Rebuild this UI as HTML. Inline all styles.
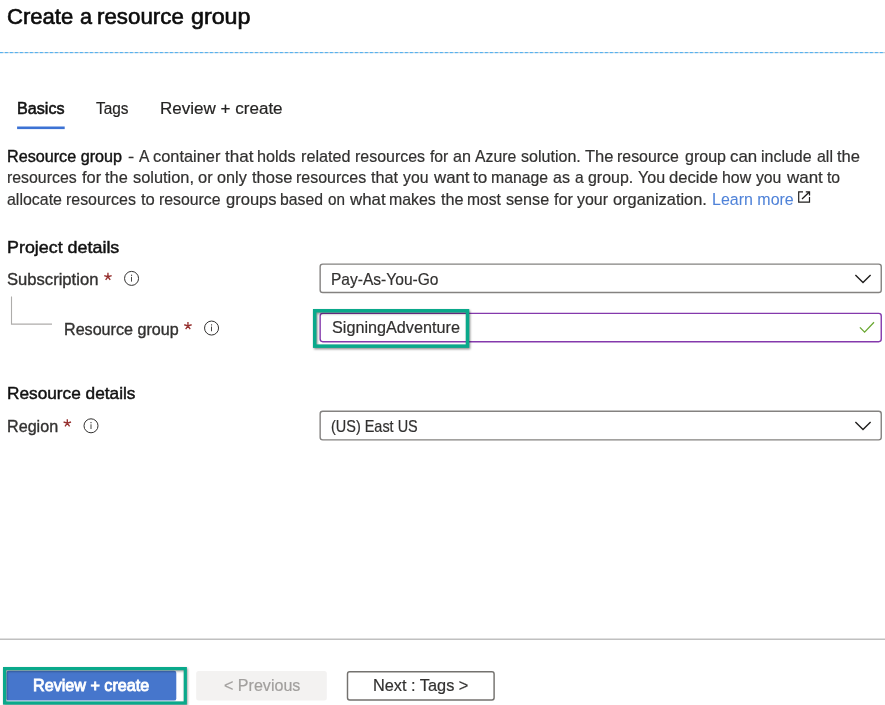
<!DOCTYPE html>
<html lang="en">
<head>
<meta charset="utf-8">
<title>Create a resource group</title>
<style>
html,body{margin:0;padding:0;background:#fff;}
body{width:885px;height:705px;position:relative;overflow:hidden;font-family:"Liberation Sans",sans-serif;}
.t{position:absolute;white-space:pre;line-height:1;transform-origin:0 0;display:block;}
#tx{position:absolute;left:0;top:0;width:885px;height:705px;will-change:transform;}
.a{position:absolute;display:block;overflow:visible;}
.box{position:absolute;box-sizing:border-box;background:#fff;}
</style>
</head>
<body>
<svg class="a" style="left:0;top:0" width="885" height="705" viewBox="0 0 885 705">
<defs>
<filter id="sh" x="-10%" y="-20%" width="120%" height="150%"><feGaussianBlur stdDeviation="1.1"/></filter>
<pattern id="dash" x="-0.2" y="0" width="5" height="2" patternUnits="userSpaceOnUse"><rect x="0" y="0" width="5" height="2" fill="#dddbd9"/><rect x="0" y="0" width="3.3" height="2" fill="#56b1ef"/></pattern>
</defs>
<!-- title dashed separator -->
<rect x="0" y="52" width="885" height="1.2" fill="url(#dash)"/>
<!-- active tab underline -->
<rect x="17.1" y="126.5" width="47.6" height="2.6" fill="#3c72d4"/>
<!-- external link icon -->
<g fill="none" stroke="#201f1e" stroke-width="1.2"><path d="M803 191.8H798.7V202.1H809.5V197"/><path d="M802 199L809.3 192M805.8 191.8H809.5V195.5" stroke-width="1.3"/></g>
<!-- tree connector -->
<path d="M11.5 296.4V324.1H52" fill="none" stroke="#aeacaa" stroke-width="1.1"/>
<!-- subscription dropdown -->
<rect x="320.15" y="264.1" width="561.1" height="28.4" rx="2.6" fill="#fff" stroke="#848280" stroke-width="1.4"/>
<path d="M855.4 275L863 282.5L870.6 275" fill="none" stroke="#201f1e" stroke-width="1.4"/>
<!-- resource group input -->
<rect x="320.15" y="313.4" width="561.1" height="28.3" rx="2.6" fill="#fff" stroke="#8439ac" stroke-width="1.4"/>
<path d="M859.9 327.4L864.6 332.1L874 322.3" fill="none" stroke="#6aa832" stroke-width="1.3"/>
<!-- teal highlight around resource group input (shadow then frame) -->
<rect x="315.7" y="312.1" width="152.8" height="35.4" fill="none" stroke="#000" stroke-opacity=".45" stroke-width="3.4" filter="url(#sh)"/>
<rect x="314.7" y="310.75" width="152.8" height="35.4" fill="none" stroke="#0aa98b" stroke-width="3.5"/>
<!-- region dropdown -->
<rect x="320.15" y="411.3" width="561.1" height="28.6" rx="2.6" fill="#fff" stroke="#848280" stroke-width="1.4"/>
<path d="M855.4 422L863 429.5L870.6 422" fill="none" stroke="#201f1e" stroke-width="1.4"/>
<!-- footer rule -->
<rect x="0" y="638.5" width="885" height="1.5" fill="#c0c0c0"/>
<!-- buttons -->
<rect x="6.5" y="670.8" width="169.8" height="29.8" rx="2.2" fill="#4676cc"/>
<rect x="196.2" y="671" width="130.6" height="29.6" rx="2.5" fill="#f3f2f1"/>
<rect x="347.5" y="671.8" width="146.6" height="28.2" rx="2.2" fill="#fff" stroke="#74726f" stroke-width="1.45"/>
<!-- teal highlight around primary button -->
<rect x="5.4" y="669.8" width="180.7" height="34.4" fill="none" stroke="#000" stroke-opacity=".4" stroke-width="3.1" filter="url(#sh)"/>
<rect x="4.6" y="668.6" width="180.7" height="34.4" fill="none" stroke="#0aa98b" stroke-width="3.2"/>
<path d="M107.95 276.75L107.95 272.85M107.95 276.75L111.66 275.54M107.95 276.75L110.24 279.91M107.95 276.75L105.66 279.91M107.95 276.75L104.24 275.54" fill="none" stroke="#96302f" stroke-width="1.35"/><path d="M187.95 325.95L187.95 322.05M187.95 325.95L191.66 324.74M187.95 325.95L190.24 329.11M187.95 325.95L185.66 329.11M187.95 325.95L184.24 324.74" fill="none" stroke="#96302f" stroke-width="1.35"/><path d="M67.30 423.20L67.30 419.30M67.30 423.20L71.01 421.99M67.30 423.20L69.59 426.36M67.30 423.20L65.01 426.36M67.30 423.20L63.59 421.99" fill="none" stroke="#96302f" stroke-width="1.35"/><circle cx="131.55" cy="278.4" r="7" fill="none" stroke="#323130" stroke-width="1"/><rect x="131.10" y="276.90" width="0.9" height="4.7" fill="#323130"/><rect x="131.00" y="274.70" width="1.1" height="1.1" fill="#323130"/><circle cx="211.55" cy="328.05" r="7" fill="none" stroke="#323130" stroke-width="1"/><rect x="211.10" y="326.55" width="0.9" height="4.7" fill="#323130"/><rect x="211.00" y="324.35" width="1.1" height="1.1" fill="#323130"/><circle cx="91.0" cy="425.8" r="7" fill="none" stroke="#323130" stroke-width="1"/><rect x="90.55" y="424.30" width="0.9" height="4.7" fill="#323130"/><rect x="90.45" y="422.10" width="1.1" height="1.1" fill="#323130"/>
</svg>

<div id="tx">
<span class="t" style="left:6.58px;top:5.93px;font-size:21.7px;color:#0c0c0c;transform:scaleX(1.0179);-webkit-text-stroke:0.6px #0c0c0c">Create </span>
<span class="t" style="left:80.00px;top:5.93px;font-size:21.7px;color:#0c0c0c;transform:scaleX(0.9948);-webkit-text-stroke:0.6px #0c0c0c">a </span>
<span class="t" style="left:96.97px;top:5.93px;font-size:21.7px;color:#0c0c0c;transform:scaleX(1.0287);-webkit-text-stroke:0.6px #0c0c0c">resource </span>
<span class="t" style="left:191.30px;top:5.93px;font-size:21.7px;color:#0c0c0c;transform:scaleX(1.0721);-webkit-text-stroke:0.6px #0c0c0c">group</span>
<span class="t" style="left:16.91px;top:100.78px;font-size:16.8px;color:#111;transform:scaleX(0.9626);-webkit-text-stroke:0.55px #111">Basics</span>
<span class="t" style="left:95.60px;top:100.36px;font-size:17.3px;color:#252423;transform:scaleX(0.8895);-webkit-text-stroke:0.2px #252423">Tags</span>
<span class="t" style="left:159.51px;top:100.16px;font-size:17.3px;color:#252423;transform:scaleX(0.9855);-webkit-text-stroke:0.2px #252423">Review + create</span>
<span class="t" style="left:6.80px;top:147.69px;font-size:16.2px;color:#111;transform:scaleX(0.9984);-webkit-text-stroke:0.4px #111">Resource group</span>
<span class="t" style="left:128.00px;top:147.69px;font-size:16.2px;color:#323130;transform:scaleX(1.1521);-webkit-text-stroke:0.2px #323130">- </span>
<span class="t" style="left:139.40px;top:147.69px;font-size:16.2px;color:#323130;transform:scaleX(0.9647);-webkit-text-stroke:0.2px #323130">A </span>
<span class="t" style="left:153.29px;top:147.69px;font-size:16.2px;color:#323130;transform:scaleX(1.0122);-webkit-text-stroke:0.2px #323130">container </span>
<span class="t" style="left:225.25px;top:147.69px;font-size:16.2px;color:#323130;transform:scaleX(1.0541);-webkit-text-stroke:0.2px #323130">that </span>
<span class="t" style="left:257.46px;top:147.69px;font-size:16.2px;color:#323130;transform:scaleX(1.0003);-webkit-text-stroke:0.2px #323130">holds </span>
<span class="t" style="left:300.67px;top:147.69px;font-size:16.2px;color:#323130;transform:scaleX(1.0002);-webkit-text-stroke:0.2px #323130">related </span>
<span class="t" style="left:354.70px;top:147.69px;font-size:16.2px;color:#323130;transform:scaleX(0.9850);-webkit-text-stroke:0.2px #323130">resources </span>
<span class="t" style="left:430.13px;top:147.69px;font-size:16.2px;color:#323130;transform:scaleX(0.9714);-webkit-text-stroke:0.2px #323130">for </span>
<span class="t" style="left:452.85px;top:147.69px;font-size:16.2px;color:#323130;transform:scaleX(0.9981);-webkit-text-stroke:0.2px #323130">an </span>
<span class="t" style="left:475.33px;top:147.69px;font-size:16.2px;color:#323130;transform:scaleX(0.9752);-webkit-text-stroke:0.2px #323130">Azure </span>
<span class="t" style="left:520.96px;top:147.69px;font-size:16.2px;color:#323130;transform:scaleX(0.9913);-webkit-text-stroke:0.2px #323130">solution. </span>
<span class="t" style="left:585.19px;top:147.69px;font-size:16.2px;color:#323130;transform:scaleX(1.0207);-webkit-text-stroke:0.2px #323130">The </span>
<span class="t" style="left:617.29px;top:147.69px;font-size:16.2px;color:#323130;transform:scaleX(0.9818);-webkit-text-stroke:0.2px #323130">resource </span>
<span class="t" style="left:684.53px;top:147.69px;font-size:16.2px;color:#323130;transform:scaleX(0.9901);-webkit-text-stroke:0.2px #323130">group </span>
<span class="t" style="left:729.98px;top:147.69px;font-size:16.2px;color:#323130;transform:scaleX(1.0397);-webkit-text-stroke:0.2px #323130">can </span>
<span class="t" style="left:760.82px;top:147.69px;font-size:16.2px;color:#323130;transform:scaleX(0.9861);-webkit-text-stroke:0.2px #323130">include </span>
<span class="t" style="left:816.83px;top:147.69px;font-size:16.2px;color:#323130;transform:scaleX(0.9837);-webkit-text-stroke:0.2px #323130">all </span>
<span class="t" style="left:837.29px;top:147.69px;font-size:16.2px;color:#323130;transform:scaleX(1.0221);-webkit-text-stroke:0.2px #323130">the</span>
<span class="t" style="left:6.62px;top:169.29px;font-size:16.2px;color:#323130;transform:scaleX(0.9798);-webkit-text-stroke:0.2px #323130">resources </span>
<span class="t" style="left:81.65px;top:169.29px;font-size:16.2px;color:#323130;transform:scaleX(1.0135);-webkit-text-stroke:0.2px #323130">for </span>
<span class="t" style="left:105.36px;top:169.29px;font-size:16.2px;color:#323130;transform:scaleX(1.0095);-webkit-text-stroke:0.2px #323130">the </span>
<span class="t" style="left:132.63px;top:169.29px;font-size:16.2px;color:#323130;transform:scaleX(1.0119);-webkit-text-stroke:0.2px #323130">solution, </span>
<span class="t" style="left:198.20px;top:169.29px;font-size:16.2px;color:#323130;transform:scaleX(1.0164);-webkit-text-stroke:0.2px #323130">or </span>
<span class="t" style="left:217.41px;top:169.29px;font-size:16.2px;color:#323130;transform:scaleX(1.0027);-webkit-text-stroke:0.2px #323130">only </span>
<span class="t" style="left:251.71px;top:169.29px;font-size:16.2px;color:#323130;transform:scaleX(1.0194);-webkit-text-stroke:0.2px #323130">those </span>
<span class="t" style="left:295.69px;top:169.29px;font-size:16.2px;color:#323130;transform:scaleX(0.9877);-webkit-text-stroke:0.2px #323130">resources </span>
<span class="t" style="left:371.32px;top:169.29px;font-size:16.2px;color:#323130;transform:scaleX(1.0022);-webkit-text-stroke:0.2px #323130">that </span>
<span class="t" style="left:402.89px;top:169.29px;font-size:16.2px;color:#323130;transform:scaleX(0.9749);-webkit-text-stroke:0.2px #323130">you </span>
<span class="t" style="left:433.77px;top:169.29px;font-size:16.2px;color:#323130;transform:scaleX(1.0373);-webkit-text-stroke:0.2px #323130">want </span>
<span class="t" style="left:472.88px;top:169.29px;font-size:16.2px;color:#323130;transform:scaleX(1.0569);-webkit-text-stroke:0.2px #323130">to </span>
<span class="t" style="left:490.93px;top:169.29px;font-size:16.2px;color:#323130;transform:scaleX(0.9770);-webkit-text-stroke:0.2px #323130">manage </span>
<span class="t" style="left:553.46px;top:169.29px;font-size:16.2px;color:#323130;transform:scaleX(0.9911);-webkit-text-stroke:0.2px #323130">as </span>
<span class="t" style="left:574.87px;top:169.29px;font-size:16.2px;color:#323130;transform:scaleX(0.9663);-webkit-text-stroke:0.2px #323130">a </span>
<span class="t" style="left:587.93px;top:169.29px;font-size:16.2px;color:#323130;transform:scaleX(0.9856);-webkit-text-stroke:0.2px #323130">group. </span>
<span class="t" style="left:637.62px;top:169.29px;font-size:16.2px;color:#323130;transform:scaleX(0.9914);-webkit-text-stroke:0.2px #323130">You </span>
<span class="t" style="left:669.17px;top:169.29px;font-size:16.2px;color:#323130;transform:scaleX(1.0287);-webkit-text-stroke:0.2px #323130">decide </span>
<span class="t" style="left:721.89px;top:169.29px;font-size:16.2px;color:#323130;transform:scaleX(0.9809);-webkit-text-stroke:0.2px #323130">how </span>
<span class="t" style="left:756.42px;top:169.29px;font-size:16.2px;color:#323130;transform:scaleX(0.9720);-webkit-text-stroke:0.2px #323130">you </span>
<span class="t" style="left:787.22px;top:169.29px;font-size:16.2px;color:#323130;transform:scaleX(1.0460);-webkit-text-stroke:0.2px #323130">want </span>
<span class="t" style="left:826.76px;top:169.29px;font-size:16.2px;color:#323130;transform:scaleX(0.9727);-webkit-text-stroke:0.2px #323130">to</span>
<span class="t" style="left:7.40px;top:191.29px;font-size:16.2px;color:#323130;transform:scaleX(0.9857);-webkit-text-stroke:0.2px #323130">allocate </span>
<span class="t" style="left:65.85px;top:191.29px;font-size:16.2px;color:#323130;transform:scaleX(0.9834);-webkit-text-stroke:0.2px #323130">resources </span>
<span class="t" style="left:141.16px;top:191.29px;font-size:16.2px;color:#323130;transform:scaleX(1.0251);-webkit-text-stroke:0.2px #323130">to </span>
<span class="t" style="left:158.63px;top:191.29px;font-size:16.2px;color:#323130;transform:scaleX(0.9771);-webkit-text-stroke:0.2px #323130">resource </span>
<span class="t" style="left:225.55px;top:191.29px;font-size:16.2px;color:#323130;transform:scaleX(1.0224);-webkit-text-stroke:0.2px #323130">groups </span>
<span class="t" style="left:279.78px;top:191.29px;font-size:16.2px;color:#323130;transform:scaleX(0.9748);-webkit-text-stroke:0.2px #323130">based </span>
<span class="t" style="left:328.14px;top:191.29px;font-size:16.2px;color:#323130;transform:scaleX(0.9445);-webkit-text-stroke:0.2px #323130">on </span>
<span class="t" style="left:350.45px;top:191.29px;font-size:16.2px;color:#323130;transform:scaleX(1.0411);-webkit-text-stroke:0.2px #323130">what </span>
<span class="t" style="left:388.72px;top:191.29px;font-size:16.2px;color:#323130;transform:scaleX(0.9818);-webkit-text-stroke:0.2px #323130">makes </span>
<span class="t" style="left:440.94px;top:191.29px;font-size:16.2px;color:#323130;transform:scaleX(1.0043);-webkit-text-stroke:0.2px #323130">the </span>
<span class="t" style="left:467.10px;top:191.29px;font-size:16.2px;color:#323130;transform:scaleX(0.9654);-webkit-text-stroke:0.2px #323130">most </span>
<span class="t" style="left:506.28px;top:191.29px;font-size:16.2px;color:#323130;transform:scaleX(0.9995);-webkit-text-stroke:0.2px #323130">sense </span>
<span class="t" style="left:553.96px;top:191.29px;font-size:16.2px;color:#323130;transform:scaleX(0.9967);-webkit-text-stroke:0.2px #323130">for </span>
<span class="t" style="left:577.27px;top:191.29px;font-size:16.2px;color:#323130;transform:scaleX(0.9865);-webkit-text-stroke:0.2px #323130">your </span>
<span class="t" style="left:612.89px;top:191.29px;font-size:16.2px;color:#323130;transform:scaleX(1.0131);-webkit-text-stroke:0.2px #323130">organization.</span>
<span class="t" style="left:711.64px;top:191.29px;font-size:16.2px;color:#4f82d8;transform:scaleX(0.9874);-webkit-text-stroke:0.05px #4f82d8">Learn more</span>
<span class="t" style="left:6.77px;top:238.51px;font-size:17.0px;color:#111;transform:scaleX(1.0519);-webkit-text-stroke:0.45px #111">Project details</span>
<span class="t" style="left:7.17px;top:271.12px;font-size:16.4px;color:#323130;transform:scaleX(1.0129);-webkit-text-stroke:0.35px #323130">Subscription</span>
<span class="t" style="left:331.44px;top:271.29px;font-size:16.2px;color:#323130;transform:scaleX(0.9606);-webkit-text-stroke:0.2px #323130">Pay-As-You-Go</span>
<span class="t" style="left:331.90px;top:319.29px;font-size:16.2px;color:#323130;transform:scaleX(1.0008);-webkit-text-stroke:0.2px #323130">SigningAdventure</span>
<span class="t" style="left:63.89px;top:320.52px;font-size:16.4px;color:#323130;transform:scaleX(0.9830);-webkit-text-stroke:0.35px #323130">Resource group</span>
<span class="t" style="left:6.81px;top:385.31px;font-size:17.0px;color:#111;transform:scaleX(1.0146);-webkit-text-stroke:0.45px #111">Resource details</span>
<span class="t" style="left:6.79px;top:417.72px;font-size:16.4px;color:#323130;transform:scaleX(0.9845);-webkit-text-stroke:0.35px #323130">Region</span>
<span class="t" style="left:330.61px;top:417.89px;font-size:16.2px;color:#323130;transform:scaleX(0.8925);-webkit-text-stroke:0.2px #323130">(US) East US</span>
<span class="t" style="left:33.44px;top:677.12px;font-size:16.4px;color:#fff;transform:scaleX(0.9853);-webkit-text-stroke:0.85px #fff">Review + create</span>
<span class="t" style="left:224.10px;top:677.12px;font-size:16.4px;color:#a19f9d;transform:scaleX(0.9806);-webkit-text-stroke:0.2px #a19f9d">&lt; Previous</span>
<span class="t" style="left:372.50px;top:677.12px;font-size:16.4px;color:#323130;transform:scaleX(0.9952);-webkit-text-stroke:0.2px #323130">Next : Tags &gt;</span>
</div>
</body>
</html>
